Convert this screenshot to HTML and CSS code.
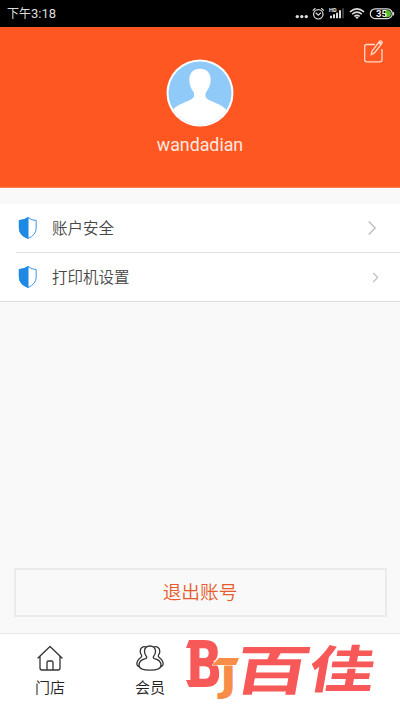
FILE: index.html
```html
<!DOCTYPE html>
<html lang="zh-CN">
<head>
<meta charset="utf-8">
<title>账户</title>
<link rel="stylesheet" href="styles.css">
</head>
<body>
<div class="screen">
  <div class="status">
    <span class="time">下午<span class="digits">3:18</span></span>
    <svg class="status-icons" width="104" height="20" viewBox="292 4 104 20" fill="none" stroke="#ddd" stroke-width="1.2">
      <g fill="#ddd" stroke="none"><circle cx="297.3" cy="16.6" r="1.7"/><circle cx="301.8" cy="16.6" r="1.7"/><circle cx="306.3" cy="16.6" r="1.7"/></g>
      <circle cx="318.3" cy="14.3" r="4.7"/><path d="M315.700 12.800l2.600 2.400 2.600-2.400M312.700 10.600l2.700-2.300M323.900 10.600l-2.700-2.300"/>
      <text class="hd" x="329" y="11.500">HD</text>
      <path d="M331 18.300v-2.500M334 18.300v-4M337 18.300v-5.500M340 18.300v-8" stroke-width="2"/><path d="M343 18.300V8.200" stroke="#555" stroke-width="1.400"/>
      <path d="M350 11.800q7-6 14 0M352.200 14.200q4.800-4 9.600 0M354.300 16.400q2.700-2 5.400 0" stroke-width="1.600"/><path d="M355.200 17.200l1.800 1.800 1.800-1.800q-1.800-1-3.600 0z" fill="#ddd" stroke="none"/>
      <rect x="370.300" y="8.800" width="22" height="9.800" rx="4.900"/><path d="M385 10.200h2.500a3.500 3.500 0 0 1 0 7H385z" fill="#54c22f" stroke="none"/><path d="M393.500 12v3.400"/>
      <text class="level" x="376" y="17.300">35</text>
    </svg>
  </div>
  <header class="profile">
    <svg class="edit" width="22" height="24" viewBox="362 39 22 24" fill="none" stroke="#ffd9cc" stroke-width="1.300">
      <path d="M375 44.500h-8.300q-2 0-2 2v13.300q0 2 2 2h13.300q2 0 2-2V49"/>
      <path d="M371.300 54.500l.8-3.400 7.300-9.600q1-1.200 2.200-.3 1.200 1 .3 2.200l-7.400 9.500z"/><path d="M379 42.300l2.200 1.700" stroke-width="2.600"/>
    </svg>
    <svg class="avatar" width="68" height="68" viewBox="0 0 68 68">
      <defs><clipPath id="face"><circle cx="34" cy="34" r="31.500"/></clipPath></defs>
      <circle cx="34" cy="34" r="33.500" fill="#fff"/><circle cx="34" cy="34" r="31.500" fill="#90caf9"/>
      <path clip-path="url(#face)" fill="#fff" d="M34 9.700c7 0 10.700 4.500 10.700 11 0 5-2 9-4.700 12.500-1.500 4 0 6.300 3 7.800 7 3.200 14 5.500 18 10.500V68H6V51.500c4-5 11-7.300 18-10.500 3.500-1.500 5-4 3.700-7.800-2.700-3.500-4.400-7.500-4.400-12.500 0-6.500 3.700-11 10.700-11z"/>
    </svg>
    <div class="name">wandadian</div>
  </header>
  <main class="content">
    <div class="list">
      <div class="row">
        <svg class="shield" width="20" height="24" viewBox="0 0 20 24"><path d="M10 1.500Q6 4.500 1.300 4.500V12Q1.300 19 10 22.500Q18.200 19 18.200 12V4.500Q14 4.500 10 1.500Z" fill="#fff" stroke="#3d97e4"/><path d="M10.500 1Q6 4.300.9 4.300V12Q.9 19.500 10.500 23Z" fill="#1e88e5"/></svg>
        <span class="label">账户安全</span>
        <svg class="arrow" width="10" height="16" viewBox="0 0 10 16"><path d="M.7 1.500L7.200 8 .7 14.500"/></svg>
      </div>
      <div class="line"></div>
      <div class="row">
        <svg class="shield" width="20" height="24" viewBox="0 0 20 24"><path d="M10 1.500Q6 4.500 1.300 4.500V12Q1.300 19 10 22.500Q18.200 19 18.200 12V4.500Q14 4.500 10 1.500Z" fill="#fff" stroke="#3d97e4"/><path d="M10.500 1Q6 4.300.9 4.300V12Q.9 19.500 10.500 23Z" fill="#1e88e5"/></svg>
        <span class="label">打印机设置</span>
        <svg class="arrow small" width="8" height="12" viewBox="0 0 8 12"><path d="M1.200 2L5.700 6.500 1.200 11"/></svg>
      </div>
    </div>
    <button class="logout">退出账号</button>
  </main>
  <nav class="tabs">
    <div class="tab">
      <svg width="28" height="28" viewBox="0 0 28 28"><path d="M2 14L14 2.500 26 14M4 12.300V24q0 2 2 2h16q2 0 2-2V12.300M11 26v-7.500q0-1.500 1.500-1.500h3q1.500 0 1.500 1.500V26"/></svg>
      <span>门店</span>
    </div>
    <div class="tab">
      <svg width="28" height="28" viewBox="0 0 28 28"><path d="M14 2c-3.600 0-5.500 2.300-5.500 5.400 0 2.500 1 3.800 2 5.200.6 1 0 1.700-1 2C5.500 15.500 3 18 3 21.300 3 25 7 26.200 14 26.200s11-1.200 11-4.900c0-3.300-2.500-5.800-6.500-6.700-1-.3-1.600-1-1-2 1-1.400 2-2.700 2-5.200C19.500 4.300 17.600 2 14 2zM10.500 3C6.500 1.800 4.200 4.200 4.200 7.400c0 1.600.6 2.600 1.300 3.600.6.900.3 1.500-.5 2.200C2 15.500.8 17.300.8 20c0 1.200 1 2.300 2.500 3M17.500 3C21.500 1.800 23.800 4.200 23.800 7.400c0 1.600-.6 2.600-1.300 3.600-.6.900-.3 1.500.5 2.200 3 2.300 4.200 4.100 4.200 6.800 0 1.200-1 2.300-2.500 3"/></svg>
      <span>会员</span>
    </div>
    <svg class="brand" width="200" height="77" viewBox="180 634 200 77">
      <text class="brand-b" transform="translate(186 687) scale(.75 1)" font-size="64">B</text>
      <path class="brand-serif" d="M189 640h6v8h-9zM186 680h9v7h-6z"/>
      <text class="brand-j" transform="translate(220 689.500) scale(1.100 1)" font-size="41">J</text>
      <path class="brand-bar" d="M219 658h20l-3 7h-24z"/>
      <text class="brand-cn" transform="translate(231.500 689.500) skewX(-10) scale(1.400 1)" font-size="54">百</text>
      <text class="brand-cn" transform="translate(306 688) skewX(-10) scale(1.300 1)" font-size="51">佳</text>
    </svg>
  </nav>
</div>
</body>
</html>
```
FILE: styles.css
```css
* { box-sizing: border-box; }
body { margin: 0; font-family: "Noto Sans CJK SC", sans-serif; color: #484848; }
.screen { width: 400px; height: 711px; display: flex; flex-direction: column; background: #f9f9f9; overflow: hidden; }
.status { height: 27px; flex: none; background: #000; display: flex; justify-content: space-between; align-items: center; padding: 0 4px 0 7px; }
.time { color: #ddd; font-size: 12px; line-height: 20px; }
.digits { font-family: Roboto, sans-serif; font-size: 13px; }
.status-icons text { fill: #eee; stroke: none; font-family: Roboto, sans-serif; font-weight: 700; }
.status-icons .hd { font-size: 5.5px; }
.status-icons .level { font-size: 9.5px; }
.profile { height: 161px; flex: none; background: #ff5722; position: relative; display: flex; flex-direction: column; align-items: center; padding-top: 32px; border-bottom: 1px solid #f87d55; }
.edit { position: absolute; top: 12px; right: 16px; }
.avatar { display: block; }
.name { margin-top: 7px; color: #ffe8e0; font: 17.8px/22px Roboto, sans-serif; }
.content { flex: 1; display: flex; flex-direction: column; justify-content: space-between; padding: 16px 0 16px; }
.list { background: #fff; border-bottom: 1px solid #dedede; }
.row { height: 48px; display: flex; align-items: center; padding: 0 22px 0 18px; }
.shield { flex: none; }
.label { margin: 0 0 2px 14px; font-size: 15.5px; line-height: 24px; font-weight: 350; }
.arrow { margin-left: auto; fill: none; stroke: #bbb; stroke-width: 1.3; }
.small { margin-right: -2px; stroke-width: 1.1; }
.line { height: 1px; margin-left: 16px; background: #dedede; }
.logout { height: 49px; margin: 0 13px 0 14px; padding: 0 1px 3px 0; border: 2px solid #ebebeb; background: #f9f9f9; color: #e65a2b; font: 350 18.7px/26px "Noto Sans CJK SC", sans-serif; }
.tabs { height: 78px; flex: none; background: #fff; border-top: 1px solid #e8e8e8; display: flex; }
.tab { width: 100px; display: flex; flex-direction: column; align-items: center; padding-top: 10px; font-size: 15px; line-height: 24px; color: #222; font-weight: 350; }
.tab + .tab { margin-right: -20px; }
.tab svg { fill: none; stroke: #333; stroke-width: 1.3; stroke-linecap: round; stroke-linejoin: round; }
.tab span { margin-top: 3px; }
.brand { flex: none; overflow: visible; }
.brand-b { fill: #f75959; font-family: "DejaVu Sans", sans-serif; font-weight: 700; }
.brand-serif { fill: #f75959; }
.brand-j { fill: #f88c49; stroke: #fff; stroke-width: 2px; paint-order: stroke; font-family: "DejaVu Sans", sans-serif; font-weight: 700; }
.brand-bar { fill: #f88c49; stroke: #fff; stroke-width: 1px; paint-order: stroke; }
.brand-cn { fill: #f75959; font-family: "Noto Sans CJK SC", sans-serif; font-weight: 700; }
```
